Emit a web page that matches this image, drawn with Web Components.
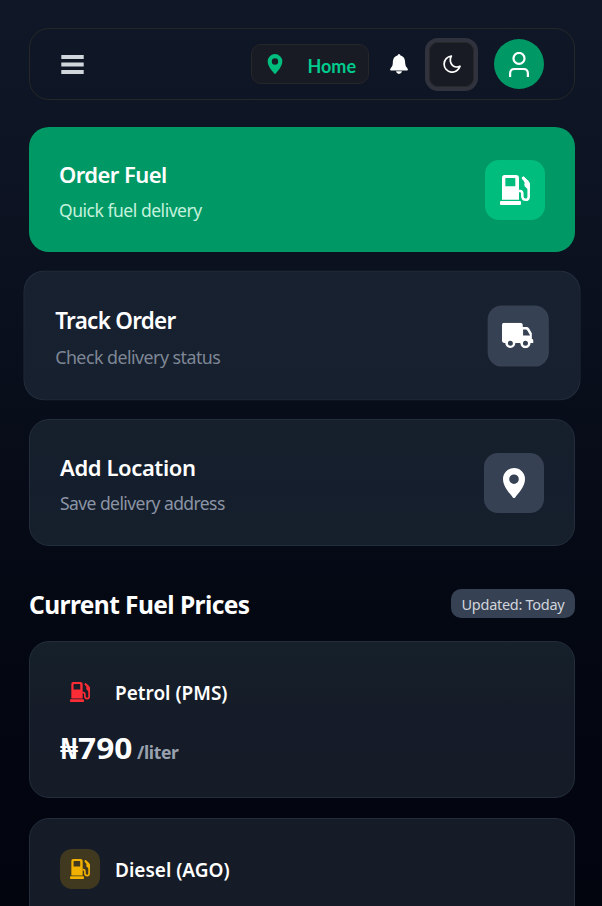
<!DOCTYPE html>
<html lang="en"><head><meta charset="utf-8"><title>Fuel delivery</title>
<style>
html,body{margin:0;height:906px;overflow:hidden}
body{font-family:"Noto Sans","Open Sans",sans-serif;color:#fff;background:#030712}
</style></head><body><fuel-app></fuel-app>
<script>
const ICONS={
fuel:['0 0 90 90','<rect y="78" width="63" height="12" rx="3" fill="currentColor"/><path fill="currentColor" fill-rule="evenodd" d="M14 0H48Q57 0 57 9V74H6V9Q6 0 14 0ZM18 9Q16 9 16 11V34H46V11Q46 9 44 9Z"/><path d="M56 48H60Q67 48 67 56V65Q68 74.500 77 74.500Q86 74.500 86 65V30Q86 25 82 21L68 7" fill="none" stroke="currentColor" stroke-width="7.500"/><path fill="currentColor" d="M70 4L86 19Q90 24 90 32V44H85L74 34Q72 30 74 24Q72 17 66 12Q63 7 70 4Z"/>'],
pin:['0 0 22 30','<path fill="currentColor" fill-rule="evenodd" d="M11 0A11 11 0 0 0 0 11C0 19 7 25.5 9.8 29.4Q11 30.6 12.2 29.4C15 25.5 22 19 22 11A11 11 0 0 0 11 0ZM11 6.4A4.8 4.8 0 1 1 11 16A4.8 4.8 0 0 1 11 6.4Z"/>'],
truck:['0 0 94 76','<path fill="currentColor" fill-rule="evenodd" d="M7 0H54Q62 0 62 8V13H73Q78 13 81 17L89 31V48Q94 49 94 54V60H85A15 15 0 0 1 55 62L54 60H40A15 15 0 0 1 10 60H8Q0 60 0 53V7Q0 0 7 0ZM63 20V38H84L76 24Q74 20 70 20ZM25 53.5A7.5 7.5 0 1 0 25 68.5A7.5 7.5 0 1 0 25 53.5ZM70 53.5A7.5 7.5 0 1 0 70 68.5A7.5 7.5 0 1 0 70 53.5Z"/>'],
menu:['0 0 23 19','<path fill="currentColor" d="M.3 0H22.700V4H.3ZM.3 7.600H22.700V11.400H.3ZM.3 15H22.700V19H.3Z"/>'],
bell:['0 0 18 20','<path fill="currentColor" d="M9 0Q10.2 0 10.5 1.5C14.5 2.5 15.2 6 15.2 9.5Q15.2 12.5 17.5 14.5Q18.5 16.5 17 16.5H1Q-.5 16.5.5 14.5Q2.8 12.5 2.8 9.5C2.8 6 3.5 2.5 7.5 1.5Q7.8 0 9 0ZM6 17.3H12Q11.5 20 9 20Q6.5 20 6 17.3Z"/>'],
moon:['0 0 18 18','<path fill="none" stroke="currentColor" stroke-width="1.7" stroke-linejoin="round" d="M8.300 1A8.100 8.100 0 1 0 17 11.200Q15.500 12 13.500 12C8.500 12 5.800 6 8.300 1Z"/>'],
user:['0 0 20 25','<circle cx="10" cy="6.4" r="5.5" fill="none" stroke="currentColor" stroke-width="2.200"/><path d="M1.100 25V21.5Q1.100 17 5.5 17H14.5Q18.900 17 18.900 21.5V25" fill="none" stroke="currentColor" stroke-width="2.200"/>']
};
function define(name,render){customElements.define(name,class extends HTMLElement{connectedCallback(){if(this.shadowRoot)return;this.attachShadow({mode:'open'}).innerHTML=render(this)}})}
define('ui-icon',e=>{const [v,p]=ICONS[e.getAttribute('name')];return `<style>:host{display:block;flex:none}svg{display:block;width:100%;height:100%}</style><svg viewBox="${v}">${p}</svg>`});
define('top-nav',()=>`<style>
:host{display:flex;align-items:center;box-sizing:border-box;height:72px;border:1px solid #272628;border-radius:20px;padding:0 30px 0 31px}
.menu{width:23px;height:19px;color:#d1d5dc;margin-right:auto}
.home{display:flex;align-items:center;box-sizing:border-box;width:118px;height:40px;border:1px solid #272628;border-radius:10px;background:#181b24;padding:0 12px 0 15px;color:#00bc7d;justify-content:space-between;font:700 18px/24px Lato,sans-serif}
.home ui-icon{width:16px;height:20px}.home span{padding-top:3px;color:#00cb8d}
.bell{width:18px;height:20px;margin:0 17px 0 21px}
.theme{box-sizing:border-box;width:53px;height:53px;border:4px solid #30333d;border-radius:13px;background:#181b24;display:grid;place-items:center;box-shadow:inset 0 0 0 1px #292929}
.theme ui-icon{width:18px;height:18px}
.avatar{width:50px;height:50px;border-radius:50%;background:#009966;display:grid;place-items:center;margin-left:16px}
.avatar ui-icon{width:20px;height:25px}
</style><ui-icon class="menu" name="menu"></ui-icon><div class="home"><ui-icon name="pin"></ui-icon><span>Home</span></div><ui-icon class="bell" name="bell"></ui-icon><div class="theme"><ui-icon name="moon"></ui-icon></div><div class="avatar"><ui-icon name="user"></ui-icon></div>`);
define('action-card',e=>`<style>
:host{display:flex;align-items:center;justify-content:space-between;box-sizing:border-box;height:127px;border:1px solid #232d3c;border-radius:20px;padding:0 30px;background:linear-gradient(#16202b,#151e2d 55%,#16202b)}
:host([primary]){height:125px;border:0;background:#009966}
:host([raised]){transform:scale(1.02);background:linear-gradient(#18212f,#17202e)}
h3{margin:0;font-size:22px;font-weight:600;line-height:34px;white-space:nowrap}
p{margin:5px 0 -1px;font-size:17.5px;line-height:28px;color:#8b94a4;white-space:nowrap}
:host([primary]) p{color:#c4f2dc}:host([raised]) p{color:#7e8796}
.box{width:60px;height:60px;border-radius:14px;background:#364153;display:grid;place-items:center}
:host([primary]) .box{background:#00bc7d}
ui-icon{width:30px;height:30px}:host([raised]) ui-icon{width:31px;height:25px;margin-right:1px}
</style><div><h3 style="letter-spacing:${e.getAttribute('ts')}px"><slot></slot></h3><p style="letter-spacing:${e.getAttribute('ss')}px"><slot name="note"></slot></p></div><div class="box"><ui-icon name="${e.getAttribute('icon')}"></ui-icon></div>`);
define('section-head',()=>`<style>
:host{display:flex;justify-content:space-between;align-items:center;height:29px;margin:43px 0 23px}
h2{margin:3px 0 0;font-size:24.5px;line-height:34px;font-weight:700;letter-spacing:-.57px}
.tag{box-sizing:border-box;width:124px;height:29px;border-radius:10px;background:#364153;color:#d1d5dc;font-size:14.5px;line-height:30px;text-align:center;letter-spacing:-.28px}
</style><h2><slot></slot></h2><div class="tag"><slot name="tag"></slot></div>`);
define('price-card',e=>`<style>
:host{display:block;box-sizing:border-box;height:157px;border:1px solid #232d3c;border-radius:20px;padding:30px;background:linear-gradient(#15202a,#151b28 55%,#151c27)}
:host([dim]){background:#151b27}
.row{display:flex;align-items:center;gap:15px;height:40px}
.box{width:40px;height:40px;border-radius:12px;display:grid;place-items:center;color:#fb2c36}
:host([dim]) .box{background:#413820;color:#f0b100}
ui-icon{width:20px;height:20px}
h3{margin:2px 0 0;font-size:19px;line-height:28px;font-weight:600;letter-spacing:0}
.price{margin-top:15px;display:flex;align-items:baseline;font-size:29px;line-height:42px;font-weight:700}
.price b{display:block;font-weight:700;transform:scaleX(1.09);transform-origin:left;width:72px}
.price span{margin-left:5px;font-size:17.5px;font-weight:700;color:#99a1af;letter-spacing:-.35px}
</style><div class="row"><div class="box"><ui-icon name="fuel"></ui-icon></div><h3><slot></slot></h3></div><div class="price"><b><slot name="price"></slot></b><span><slot name="unit"></slot></span></div>`);
define('fuel-app',()=>`<style>
:host{display:block;box-sizing:border-box;width:602px;height:906px;overflow:hidden;padding:28px 27px 0 29px;background:linear-gradient(#101828,#040813 67%,#02040e)}
.stack{display:grid;gap:20px}.actions{margin-top:27px}
</style><top-nav></top-nav>
<div class="stack actions"><action-card primary icon="fuel" ts="-.55" ss="-.47">Order Fuel<span slot="note">Quick fuel delivery</span></action-card>
<action-card raised icon="truck" ts="-.7" ss="-.54">Track Order<span slot="note">Check delivery status</span></action-card>
<action-card icon="pin" ts="-.4" ss="-.57">Add Location<span slot="note">Save delivery address</span></action-card></div>
<section-head>Current Fuel Prices<span slot="tag">Updated: Today</span></section-head>
<div class="stack"><price-card>Petrol (PMS)<span slot="price">₦790</span><span slot="unit">/liter</span></price-card>
<price-card dim>Diesel (AGO)</price-card></div>`);
</script></body></html>
